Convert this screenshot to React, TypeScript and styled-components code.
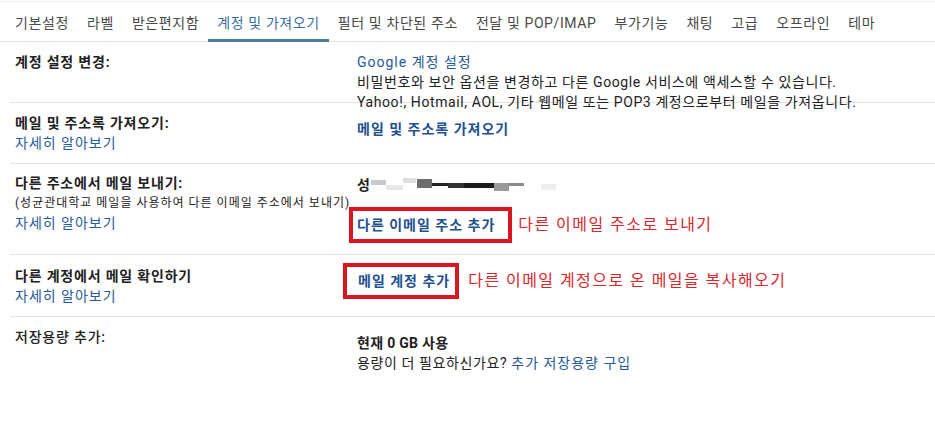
import React from 'react';
import styled, { createGlobalStyle } from 'styled-components';

const GlobalStyle = createGlobalStyle`
  body {
    margin: 0;
    background: #fff;
    font-family: Roboto, "Noto Sans CJK KR", sans-serif;
    font-size: 14px;
    color: #222;
  }
`;

const Page = styled.div`
  width: 935px;
  height: 424px;
  overflow: hidden;
  background: #fff;
`;

const TabBar = styled.div`
  display: flex;
  box-sizing: border-box;
  height: 41px;
  margin-top: 1px;
  padding-left: 6px;
  border-top: 1px solid #efefef;
  border-bottom: 1px solid #e4e4e4;
`;

const Tab = styled.div<{ active?: boolean }>`
  box-sizing: border-box;
  height: 40px;
  margin-bottom: -1px;
  padding: 3px 9px 0;
  display: flex;
  align-items: center;
  white-space: nowrap;
  font-size: 14px;
  letter-spacing: 0.6px;
  color: ${p => (p.active ? '#3b6e9c' : '#4a4a4a')};
  border-bottom: 3px solid ${p => (p.active ? '#4f7aa0' : 'transparent')};
`;

const Rows = styled.div`
  margin-left: 10px;
`;

const Row = styled.div<{ fixedHeight?: number; last?: boolean }>`
  display: grid;
  grid-template-columns: 347px 1fr;
  height: ${p => (p.fixedHeight ? `${p.fixedHeight}px` : 'auto')};
  border-bottom: ${p => (p.last ? 'none' : '1px solid #e3e3e3')};
  line-height: 20px;
`;

const Label = styled.div<{ top?: number }>`
  padding: ${p => p.top ?? 10}px 0 10px 5px;
`;

const Title = styled.div<{ weight?: number }>`
  font-weight: ${p => p.weight ?? 700};
  letter-spacing: 0.8px;
  color: #222;
`;

const Note = styled.div`
  font-size: 12px;
  letter-spacing: 1px;
  color: #222;
  white-space: nowrap;
`;

const Link = styled.a<{ bold?: boolean }>`
  color: ${p => (p.bold ? '#1e5190' : '#26599a')};
  font-weight: ${p => (p.bold ? 700 : 400)};
  letter-spacing: 1px;
  text-decoration: none;
  white-space: nowrap;
  cursor: pointer;
`;

const Value = styled.div<{ top?: number; bottom?: number }>`
  padding-top: ${p => p.top ?? 10}px;
  padding-bottom: ${p => p.bottom ?? 0}px;
  white-space: nowrap;
`;

const Line = styled.div<{ bold?: boolean }>`
  font-weight: ${p => (p.bold ? 700 : 400)};
  letter-spacing: ${p => (p.bold ? 0.3 : 0.6)}px;
`;

const NameLine = styled.div`
  display: flex;
  align-items: center;
  font-weight: 700;
  height: 20px;
`;

const ActionLine = styled.div<{ gap: number }>`
  display: flex;
  align-items: center;
  margin-top: ${p => p.gap}px;
`;

const RedBox = styled.div<{ shift: number; padLeft: number; padRight: number }>`
  border: 4px solid #d8161f;
  padding: 4px ${p => p.padRight}px 4px ${p => p.padLeft}px;
  margin-left: -${p => p.shift}px;
`;

const Annotation = styled.span<{ gap: number }>`
  margin-left: ${p => p.gap}px;
  font-size: 16px;
  letter-spacing: 1.45px;
  color: #d8262d;
`;

const tabs = [
  '기본설정',
  '라벨',
  '받은편지함',
  '계정 및 가져오기',
  '필터 및 차단된 주소',
  '전달 및 POP/IMAP',
  '부가기능',
  '채팅',
  '고급',
  '오프라인',
  '테마',
];

// pixelated blocks hiding the address
const redaction: [number, number, number, number, string][] = [
  [0, 2, 15, 5, '#c9c9c9'],
  [15, 7, 17, 5, '#e8e8e8'],
  [32, 0, 13, 5, '#dedede'],
  [46, 1, 15, 9, '#6e6e6e'],
  [61, 5, 16, 3, '#262626'],
  [77, 5, 16, 5, '#333'],
  [93, 5, 30, 5, '#1b1b1b'],
  [123, 5, 15, 8, '#9a9a9a'],
  [138, 5, 15, 3, '#8a8a8a'],
  [170, 6, 15, 6, '#eeeeee'],
];

const Redaction = () => (
  <svg width="190" height="14" viewBox="0 0 190 14" style={{ marginLeft: 1 }}>
    {redaction.map(([x, y, w, h, c], i) => (
      <rect key={i} x={x} y={y} width={w} height={h} fill={c} />
    ))}
  </svg>
);

const App: React.FC = () => {
  return (
    <Page>
      <GlobalStyle />
      <TabBar>
        {tabs.map(t => (
          <Tab key={t} active={t === '계정 및 가져오기'}>
            {t}
          </Tab>
        ))}
      </TabBar>

      <Rows>
        <Row fixedHeight={60}>
          <Label>
            <Title>계정 설정 변경:</Title>
          </Label>
          <Value>
            <Link>Google 계정 설정</Link>
            <Line>비밀번호와 보안 옵션을 변경하고 다른 Google 서비스에 액세스할 수 있습니다.</Line>
            <Line>Yahoo!, Hotmail, AOL, 기타 웹메일 또는 POP3 계정으로부터 메일을 가져옵니다.</Line>
          </Value>
        </Row>

        <Row>
          <Label>
            <Title>메일 및 주소록 가져오기:</Title>
            <Link>자세히 알아보기</Link>
          </Label>
          <Value top={16}>
            <Link bold>메일 및 주소록 가져오기</Link>
          </Value>
        </Row>

        <Row>
          <Label top={9}>
            <Title>다른 주소에서 메일 보내기:</Title>
            <Note>(성균관대학교 메일을 사용하여 다른 이메일 주소에서 보내기)</Note>
            <Link>자세히 알아보기</Link>
          </Label>
          <Value top={11} bottom={11}>
            <NameLine>
              성
              <Redaction />
            </NameLine>
            <ActionLine gap={12}>
              <RedBox shift={8} padLeft={4} padRight={13}>
                <Link bold>다른 이메일 주소 추가</Link>
              </RedBox>
              <Annotation gap={6}>다른 이메일 주소로 보내기</Annotation>
            </ActionLine>
          </Value>
        </Row>

        <Row>
          <Label top={11}>
            <Title>다른 계정에서 메일 확인하기</Title>
            <Link>자세히 알아보기</Link>
          </Label>
          <Value top={0}>
            <ActionLine gap={8}>
              <RedBox shift={14} padLeft={11} padRight={5}>
                <Link bold>메일 계정 추가</Link>
              </RedBox>
              <Annotation gap={9}>다른 이메일 계정으로 온 메일을 복사해오기</Annotation>
            </ActionLine>
          </Value>
        </Row>

        <Row last>
          <Label>
            <Title weight={500}>저장용량 추가:</Title>
          </Label>
          <Value top={16}>
            <Line bold>현재 0 GB 사용</Line>
            <Line>
              용량이 더 필요하신가요? <Link>추가 저장용량 구입</Link>
            </Line>
          </Value>
        </Row>
      </Rows>
    </Page>
  );
};

export default App;
